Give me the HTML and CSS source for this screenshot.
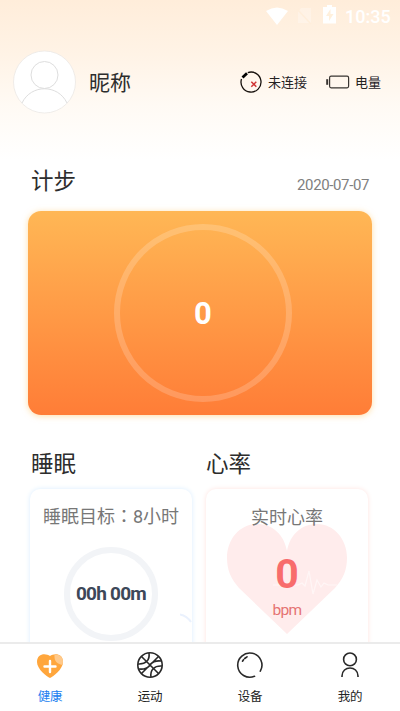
FILE: index.html
```html
<!DOCTYPE html>
<html lang="zh-CN">
<head>
<meta charset="utf-8">
<title>健康</title>
<link rel="stylesheet" href="styles.css">
</head>
<body>
<div class="app">
  <div class="statusbar">
    <svg class="wifi" width="22" height="18" viewBox="0 0 22 18"><path d="M0 4Q11-3 22 4L11 18Z" fill="#fff"/></svg>
    <svg class="sim" width="16" height="18" viewBox="0 0 16 18"><path d="M5 1h10v15H2V5Z" fill="#fff" opacity=".28"/><path d="M1 2l14 15" stroke="#ffeedb" stroke-width="1.500"/></svg>
    <svg class="charge" width="13" height="19" viewBox="0 0 13 19"><path d="M4 0h5v2h4v16.500H0V2h4Z" fill="#fff"/><path d="M7.500 4L3 11h3v5l4.500-7h-3Z" fill="#fff0dc"/></svg>
    <span class="clock">10:35</span>
  </div>

  <header class="profile">
    <svg class="avatar" width="64" height="64" viewBox="0 0 64 64"><circle cx="31.500" cy="32" r="31" fill="#fff" stroke="#e8e5e2" stroke-width=".7"/><g fill="none" stroke="#dedede"><circle cx="31.500" cy="25" r="13.500"/><path d="M9 53C18 34 45 34 54 53"/></g></svg>
    <span class="nickname">昵称</span>
    <div class="state link">
      <svg width="22" height="22" viewBox="0 0 22 22" fill="none"><path d="M7.800 1.600A10 10 0 1 1 1.500 8" stroke="#17110d" stroke-width="1.300"/><path d="M2.500 6.600L7 2.300" stroke="#000" stroke-width="2.800"/><path d="M11.300 10.700l5 5M16.300 10.700l-5 5" stroke="#d03535" stroke-width="1.500"/></svg>
      <span>未连接</span>
    </div>
    <div class="state power">
      <svg width="24" height="14" viewBox="0 0 24 14" fill="none"><rect x="3.600" y="1.200" width="19" height="11.600" rx="1.500" stroke="#393531" stroke-width="1.200"/><path d="M1.200 4.200v5.600" stroke="#393531" stroke-width="2"/></svg>
      <span>电量</span>
    </div>
  </header>

  <main class="content">
    <div class="steps-head"><h2>计步</h2><time>2020-07-07</time></div>
    <section class="steps-card"><div class="steps-ring">0</div></section>
    <div class="columns">
      <section>
        <h2>睡眠</h2>
        <div class="card sleep">
          <p>睡眠目标<span class="colon" lang="zh-TW">：</span>8小时</p>
          <div class="sleep-ring">00h 00m</div>
          <svg class="corner-arc" width="12" height="14" viewBox="0 0 12 14"><path d="M0 1.500Q7 3 11 9" fill="none" stroke="#eaf1fd" stroke-width="2"/></svg>
        </div>
      </section>
      <section>
        <h2>心率</h2>
        <div class="card heart">
          <p>实时心率</p>
          <div class="heart-body">
            <svg width="122" height="112" viewBox="0 0 122 112"><path d="M61 111L13 65C5 56 1 47 1 35C1 16 14 1 31 1C46 1 58 11 61 28C64 11 76 1 91 1C108 1 121 16 121 35C121 47 117 56 109 65Z" fill="#ffecec"/><path d="M47 62h25l4-2 3 3 4-15 4 23 4-14 4 7 3-4 4 2h9" fill="none" stroke="#fff6f6" stroke-width="1.200"/></svg>
            <div class="reading"><strong>0</strong><span>bpm</span></div>
          </div>
        </div>
      </section>
    </div>
  </main>

  <nav class="tabs">
    <a class="tab active"><svg width="28" height="28" viewBox="0 0 28 28"><path d="M14 27C11 26 1 18 1 11C1 2 10 2 14 5C18 2 27 2 27 11C27 18 17 26 14 27Z" fill="#ffa63c"/><path d="M18.500 4C23 3 27 5 27 11C27 12 26.800 13 26.400 14C21 13 18 10 18.500 4Z" fill="#ffc98a"/><path d="M14 10v11M8.500 15.500h11" stroke="#fff" stroke-width="2.400" stroke-linecap="round"/></svg><span>健康</span></a>
    <a class="tab"><svg width="28" height="28" viewBox="0 0 28 28" fill="none" stroke="#292929" stroke-width="1.600"><circle cx="14" cy="14" r="12.200"/><path d="M5.500 5.500l17 17M22.500 5.500l-17 17M13 2C14 9 10 13.500 2 13M26 15C18 14.500 14 19 15 26M14 13.500C17 10.500 21 9.500 25 10M14 14.500C11 17.500 7 18.500 3 18"/></svg><span>运动</span></a>
    <a class="tab"><svg width="28" height="28" viewBox="0 0 28 28" fill="none" stroke="#292929" stroke-width="1.600" stroke-linecap="round"><path d="M18.500 25.300A12.100 12.100 0 1 1 24.300 20.200M6.500 10.200l1-1.500M8.700 7.500l2.300-1.700"/></svg><span>设备</span></a>
    <a class="tab"><svg width="28" height="28" viewBox="0 0 28 28" fill="none" stroke="#292929" stroke-width="1.600"><circle cx="14" cy="8.400" r="6.400"/><path d="M6 26v-1C6 14.300 22 14.300 22 25v1"/></svg><span>我的</span></a>
  </nav>
</div>
</body>
</html>
```
FILE: styles.css
```css
* { box-sizing: border-box; margin: 0; }
body { font-family: Roboto, "Noto Sans CJK SC", sans-serif; color: #2d2d2d; background: #fff; }
.app { height: 711px; display: flex; flex-direction: column; overflow: hidden; background: linear-gradient(#ffedda 0, #fff3e6 55px, #fffaf4 105px, #fff 160px); }
.statusbar { height: 34px; flex: none; display: flex; justify-content: flex-end; align-items: flex-start; padding: 5px 10px 0 0; }
.wifi { margin: 2px 8px 0 0; }
.sim { margin: 2px 11px 0 0; }
.charge { margin-right: 9px; }
.clock { width: 45px; font-size: 18px; line-height: 24px; font-weight: 500; color: #fff; white-space: nowrap; }
.profile { height: 120px; flex: none; display: flex; align-items: flex-start; padding: 16px 0 0 13px; }
.nickname { margin-left: 12px; font-size: 21px; line-height: 66px; width: 151px; }
.state { display: flex; align-items: center; height: 64px; font-size: 13px; white-space: nowrap; color: #24211f; }
.state span { margin-top: -2px; }
.link { gap: 6px; margin-right: 19px; }
.power { gap: 5px; }
h2 { font-size: 22.500px; font-weight: 400; line-height: 32px; }
.content { flex: 1; min-height: 0; overflow: hidden; padding: 11px 28px 0; }
.steps-head { height: 46px; display: flex; justify-content: space-between; padding: 0 3px 0 3px; }
time { font-size: 15px; line-height: 40px; letter-spacing: -.38px; color: #808080; }
.steps-card { height: 204px; border-radius: 13px; padding: 13px 0 0 86px; background: linear-gradient(#ffb755, #ff7d37); box-shadow: 0 1px 6px #ffc86c99; }
.steps-ring { width: 178px; height: 178px; border: 6px solid #ffffff30; border-radius: 50%; color: #fff; font-size: 31px; font-weight: 700; line-height: 167px; text-align: center; }
.columns { display: grid; grid-template-columns: 162px 162px; gap: 14px; padding: 33px 0 0 2px; }
.columns h2 { padding-left: 1px; }
.columns section:last-child h2 { padding-left: 0; }
.card { height: 180px; margin-top: 9px; border-radius: 10px; background: #fff; position: relative; text-align: center; }
.card p { height: 42px; padding-top: 15px; font-size: 18px; line-height: 27px; color: #777; white-space: nowrap; }
.card.sleep p { padding-top: 14px; }
.colon { font-family: "Noto Sans CJK TC", sans-serif; line-height: 1; }
.sleep { box-shadow: 0 0 5px #d9edff; }
.heart { box-shadow: 0 0 5px #ffe3df; }
.sleep-ring { width: 94px; height: 94px; margin: 16px 0 0 34px; border: 6px solid #f2f4f7; border-radius: 50%; color: #3d4859; font-size: 19px; font-weight: 700; line-height: 82px; letter-spacing: -.75px; white-space: nowrap; }
.corner-arc { position: absolute; right: 0; top: 124px; }
.heart-body { display: grid; justify-content: center; margin-top: -8px; }
.heart-body > * { grid-area: 1 / 1; }
.heart p { position: relative; z-index: 1; }
.reading { display: flex; flex-direction: column; align-items: center; padding-top: 27px; color: #f86c6c; z-index: 1; }
.reading strong { font-size: 41px; line-height: 48px; }
.reading span { font-size: 15.500px; line-height: 24px; letter-spacing: -.6px; color: #e57373; }
.tabs { height: 69px; flex: none; display: flex; border-top: 2px solid #ebebeb; background: #fff; }
.tab { flex: 1; display: flex; flex-direction: column; align-items: center; padding-top: 7px; font-size: 12.500px; line-height: 18px; gap: 9px; color: #222; letter-spacing: -.2px; }
.tab.active { color: #1b80f0; }
```
